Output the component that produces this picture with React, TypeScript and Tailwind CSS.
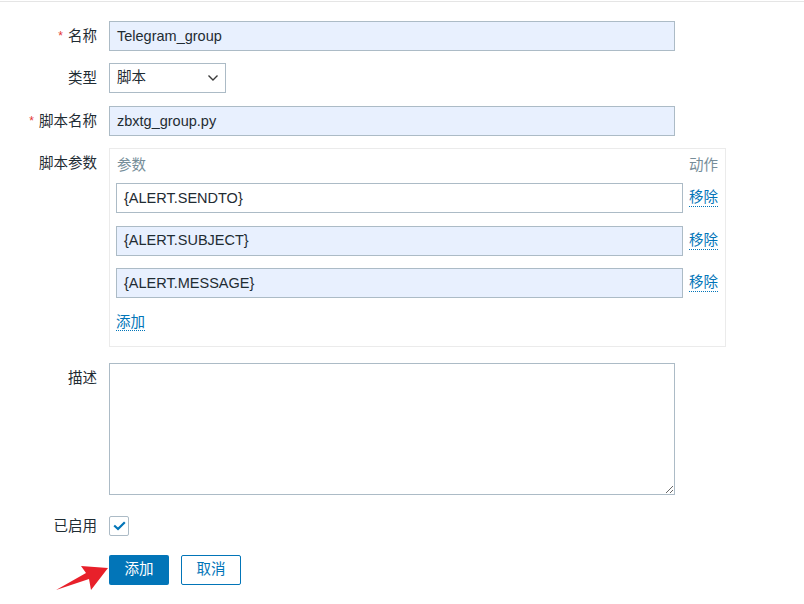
import React from 'react'

const FONT = { fontFamily: '"Liberation Sans", "Noto Sans CJK SC", sans-serif' }

const params = [
  { value: '{ALERT.SENDTO}', filled: false },
  { value: '{ALERT.SUBJECT}', filled: true },
  { value: '{ALERT.MESSAGE}', filled: true },
]

function Label({ text, required }: { text: string; required?: boolean }) {
  return (
    <div className="w-[109px] shrink-0 pr-[12px] text-right leading-[30px] text-[#1f2c33]">
      {required && <span className="mr-[5px] align-top text-[12px] text-[#e33734]">*</span>}
      {text}
    </div>
  )
}

function Link({ children }: { children: React.ReactNode }) {
  return (
    <span className="border-b border-dotted border-[#0275b8] leading-[17px] text-[#0275b8]">
      {children}
    </span>
  )
}

export default function App() {
  return (
    <div className="relative h-[604px] w-[804px] bg-white text-[14.5px]" style={FONT}>
      <div className="mt-px border-t border-[#e5e5e5]" />
      <div className="pt-[19px]">
        {/* 名称 */}
        <div className="flex">
          <Label text="名称" required />
          <div className="flex h-[30px] w-[566px] items-center border border-[#acbbc6] bg-[#e8f0fe] px-[7px] pt-px text-[#1f2c33]">
            Telegram_group
          </div>
        </div>

        {/* 类型 */}
        <div className="mt-[12px] flex">
          <Label text="类型" />
          <div className="flex h-[30px] w-[117px] items-center justify-between border border-[#acbbc6] bg-white pl-[7px] pr-[6px] text-[#1f2c33]">
            <span>脚本</span>
            <svg width="12" height="8" viewBox="0 0 12 8" fill="none">
              <path d="M1.5 1.5 L6 6 L10.5 1.5" stroke="#3a3a3a" strokeWidth="1.4" />
            </svg>
          </div>
        </div>

        {/* 脚本名称 */}
        <div className="mt-[13px] flex">
          <Label text="脚本名称" required />
          <div className="flex h-[30px] w-[566px] items-center border border-[#acbbc6] bg-[#e8f0fe] px-[7px] pt-px text-[#1f2c33]">
            zbxtg_group.py
          </div>
        </div>

        {/* 脚本参数 */}
        <div className="mt-[12px] flex">
          <Label text="脚本参数" />
          <div className="w-[617px] border border-[#ebebeb] px-[6px] pb-[14px]">
            <div className="flex h-[34px] items-center justify-between text-[#768d99]">
              <span className="pl-px">参数</span>
              <span className="w-[30px]">动作</span>
            </div>
            <div className="flex flex-col gap-[12.5px]">
              {params.map((p) => (
                <div key={p.value} className="flex items-center gap-[6px]">
                  <div
                    className={`flex h-[30px] w-[567px] items-center border border-[#acbbc6] px-[7px] pt-px text-[#1f2c33] ${
                      p.filled ? 'bg-[#e8f0fe]' : 'bg-white'
                    }`}
                  >
                    {p.value}
                  </div>
                  <Link>移除</Link>
                </div>
              ))}
            </div>
            <div className="mt-[16px] h-[18px] leading-[17px]">
              <Link>添加</Link>
            </div>
          </div>
        </div>

        {/* 描述 */}
        <div className="mt-[16px] flex">
          <Label text="描述" />
          <textarea className="block h-[132px] w-[566px] border border-[#acbbc6] bg-white outline-none" />
        </div>

        {/* 已启用 */}
        <div className="mt-[21px] flex items-center">
          <div className="w-[109px] shrink-0 pr-[12px] text-right leading-[20px] text-[#1f2c33]">已启用</div>
          <div className="flex h-[20px] w-[20px] items-center justify-center rounded-[2px] border border-[#acbbc6] bg-white">
            <svg width="13" height="10" viewBox="0 0 13 10" fill="none">
              <path d="M1.2 4.5 L5 8 L11.8 1.2" stroke="#0275b8" strokeWidth="2.2" />
            </svg>
          </div>
        </div>

        {/* buttons */}
        <div className="mt-[19px] flex gap-[12px] pl-[109px]">
          <button className="h-[30px] w-[60px] rounded-[2px] bg-[#0275b8] text-white">添加</button>
          <button className="h-[30px] w-[60px] rounded-[2px] border border-[#0275b8] bg-white text-[#0275b8]">
            取消
          </button>
        </div>
      </div>

      {/* red annotation arrow */}
      <svg className="absolute left-0 top-0" width="804" height="604" viewBox="0 0 804 604">
        <polygon
          points="108,567 81,565 86,572 56,589 89,578 91,589"
          fill="#e8202a"
        />
      </svg>
    </div>
  )
}
